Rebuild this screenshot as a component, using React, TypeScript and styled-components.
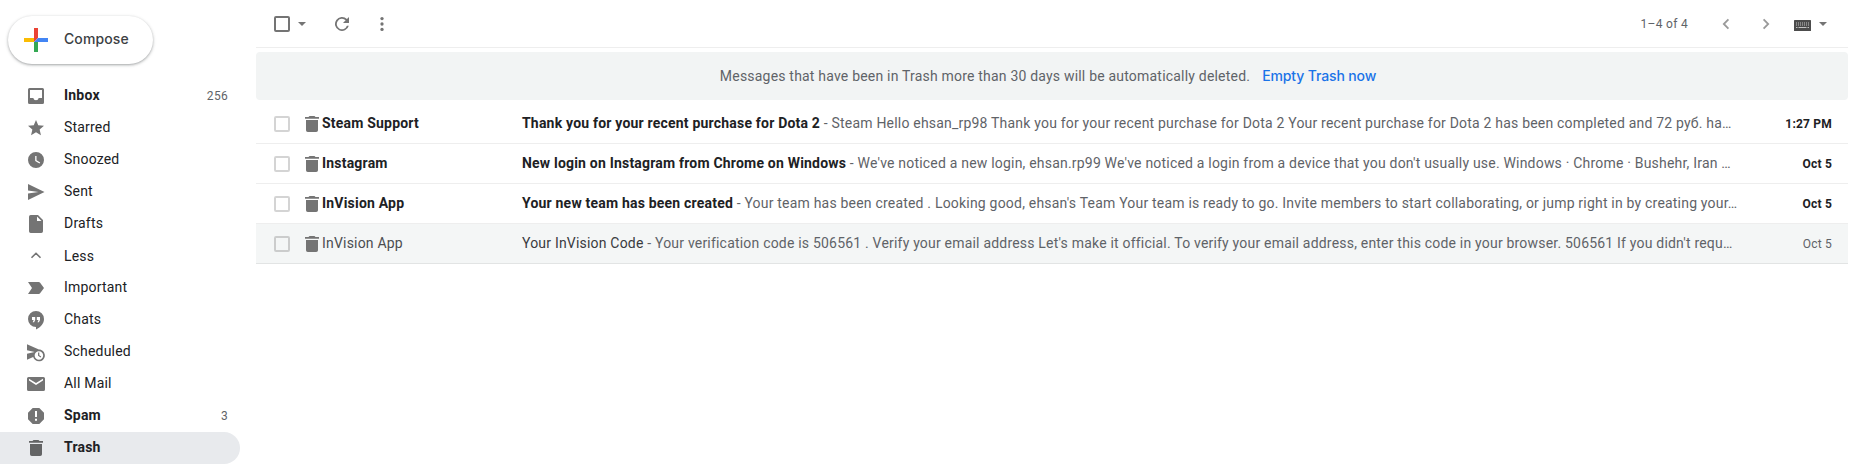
import React from "react";
import styled, { createGlobalStyle } from "styled-components";

const GlobalStyle = createGlobalStyle`
  *, *::before, *::after { box-sizing: border-box; }
  body {
    margin: 0;
    background: #fff;
    color: #202124;
    font-family: Roboto, "Liberation Sans", sans-serif;
    font-size: 14px;
    overflow: hidden;
  }
`;

const Page = styled.div`
  display: flex;
  height: 470px;
  padding-right: 14px;
`;

const Sidebar = styled.nav`
  flex: 0 0 256px;
  padding-top: 16px;
`;

const ComposeButton = styled.button`
  display: flex;
  align-items: center;
  gap: 16px;
  width: 145px;
  height: 48px;
  margin: 0 0 16px 8px;
  padding: 0 0 0 16px;
  border: 0;
  border-radius: 24px;
  background: #fff;
  color: #3c4043;
  font: 500 14px/20px Inter, sans-serif;
  letter-spacing: 0.1px;
  box-shadow: 0 1px 2px 0 rgba(60, 64, 67, 0.3), 0 1px 3px 1px rgba(60, 64, 67, 0.15);
`;

const ComposeLabel = styled.span`
  padding-bottom: 2px;
`;

const NavItem = styled.div<{ $bold?: boolean; $active?: boolean }>`
  display: flex;
  align-items: center;
  width: 240px;
  height: 32px;
  padding: 0 12px 0 26px;
  border-radius: 0 16px 16px 0;
  background: ${(p) => (p.$active ? "#e8eaed" : "transparent")};
  font-weight: ${(p) => (p.$bold ? 700 : 400)};
  letter-spacing: 0.2px;
`;

const NavLabel = styled.span<{ $low?: boolean }>`
  flex: 1;
  margin-left: 18px;
  line-height: 20px;
  padding-bottom: ${(p) => (p.$low ? "0" : "2px")};
`;

const Count = styled.span`
  color: #5f6368;
  font-size: 12px;
  font-weight: 400;
  letter-spacing: 0.3px;
`;

const Svg = styled.svg<{ $size?: number; $color?: string }>`
  display: block;
  flex: none;
  width: ${(p) => p.$size ?? 20}px;
  height: ${(p) => p.$size ?? 20}px;
  fill: ${(p) => p.$color ?? "#747474"};
`;

const Main = styled.main`
  flex: 1;
  min-width: 0;
`;

const Toolbar = styled.header`
  display: flex;
  align-items: center;
  height: 48px;
  padding: 0 21px 0 18px;
  border-bottom: 1px solid #eeeeee;
`;

const Checkbox = styled.span<{ $strong?: boolean }>`
  flex: none;
  width: 16px;
  height: 16px;
  border: 2px solid ${(p) => (p.$strong ? "#747474" : "rgba(0, 0, 0, 0.17)")};
  border-radius: 2px;
`;

const Caret = styled.span`
  width: 0;
  height: 0;
  border: 4px solid transparent;
  border-top-color: #747474;
  border-bottom: 0;
  margin-left: 8px;
`;

const ToolGroup = styled.div<{ $left?: number }>`
  display: flex;
  align-items: center;
  margin-left: ${(p) => p.$left ?? 0}px;
`;

const Pager = styled.div`
  display: flex;
  align-items: center;
  margin-left: auto;
  color: #5f6368;
  font-size: 12px;
  letter-spacing: 0.3px;
`;

const KeyboardIcon = styled.svg`
  display: block;
  width: 17px;
  height: 11px;
  margin: 4px 0 0 18px;
`;

const Banner = styled.div`
  display: flex;
  align-items: center;
  justify-content: center;
  height: 48px;
  margin: 4px 0;
  padding-right: 8px;
  border-radius: 4px;
  background: #f2f4f4;
  color: #5f6368;
  letter-spacing: 0.2px;
`;

const BannerLink = styled.a`
  margin-left: 12px;
  color: #1a73e8;
  font: 500 14px/20px Inter, sans-serif;
  letter-spacing: -0.13px;
`;

const Row = styled.div<{ $unread: boolean }>`
  display: flex;
  align-items: center;
  height: 40px;
  padding: 0 16px 0 18px;
  border-bottom: 1px solid ${(p) => (p.$unread ? "#eeeeee" : "#e2e4e4")};
  background: ${(p) => (p.$unread ? "#fff" : "#f4f6f6")};
  letter-spacing: 0.2px;
  line-height: 20px;
  white-space: nowrap;
`;

const RowIcon = styled.span`
  margin-left: 12px;
`;

const Sender = styled.span<{ $unread: boolean }>`
  flex: 0 0 200px;
  padding-bottom: 2px;
  color: ${(p) => (p.$unread ? "#202124" : "#4b4d50")};
  font-weight: ${(p) => (p.$unread ? 700 : 400)};
`;

const Message = styled.span`
  flex: 1;
  min-width: 0;
  padding-bottom: 2px;
  color: #5f6368;
`;

const Subject = styled.span<{ $unread: boolean }>`
  color: ${(p) => (p.$unread ? "#202124" : "#3a3b3e")};
  font-weight: ${(p) => (p.$unread ? 700 : 400)};
`;

const DateText = styled.span<{ $unread: boolean }>`
  color: ${(p) => (p.$unread ? "#202124" : "#5f6368")};
  font-size: 12px;
  font-weight: ${(p) => (p.$unread ? 700 : 400)};
  letter-spacing: 0.2px;
`;

const icons: Record<string, React.ReactNode> = {
  inbox: (
    <path fillRule="evenodd" d="M3.5 2h13A1.5 1.5 0 0 1 18 3.5v13a1.5 1.5 0 0 1-1.5 1.5h-13A1.5 1.5 0 0 1 2 16.500v-13A1.5 1.5 0 0 1 3.500 2zM4 4v8h3.300a2.750 2.750 0 0 0 5.400 0H16V4z" />
  ),
  star: <path d="M10 14.200 14.950 17.200 13.640 11.560 18 7.780 12.250 7.290 10 2 7.750 7.290 2 7.780 6.360 11.560 5.050 17.200z" />,
  clock: (
    <path fillRule="evenodd" d="M10 2a8 8 0 1 0 0 16 8 8 0 0 0 0-16zM9.200 6h1.300v4.200l3.700 2.200-.7 1.100-4.300-2.600z" />
  ),
  sent: <path d="M2 2 18.500 10 2 18V11.600L12.500 10 2 8.400z" />,
  draft: (
    <path fillRule="evenodd" d="M4.700 1H12l5 5v11.300a1.700 1.700 0 0 1-1.700 1.700H4.700A1.700 1.700 0 0 1 3 17.300V2.700A1.700 1.700 0 0 1 4.700 1zM11 2.500V7h4.500z" />
  ),
  less: <path d="M5.500 11.800 10 7.300l4.500 4.500" fill="none" stroke="#747474" strokeWidth="1.600" />,
  important: <path d="M2 4h10.700c.6 0 1.100.3 1.400.7L18 10l-3.900 5.300c-.3.4-.8.7-1.400.7H2l4-6z" />,
  chats: (
    <path fillRule="evenodd" d="M10 1a8 8 0 0 0 0 16v2.500c5-2.400 8-6.100 8-10.500A8 8 0 0 0 10 1zM6 7v3h1.700L6.700 12.200h1.400L9.200 10V7zM10.800 7v3h1.700l-1 2.200h1.400L14 10V7z" />
  ),
  scheduled: (
    <g transform="translate(-.7 -.2) scale(.85)">
      <path d="M16.500 12.500H15v4l3 2 .75-1.230-2.250-1.520V12.500zM16 9 2 3v7l9 2-9 2v7l7.270-3.110C10.090 20.830 12.790 23 16 23c3.860 0 7-3.140 7-7s-3.140-7-7-7zm0 12c-2.750 0-4.980-2.220-5-4.970v-.07c.02-2.740 2.250-4.960 5-4.960 2.760 0 5 2.240 5 5s-2.240 5-5 5z" />
    </g>
  ),
  mail: (
    <path fillRule="evenodd" d="M2.600 3h14.800A1.600 1.600 0 0 1 19 4.600v10.800a1.600 1.600 0 0 1-1.600 1.600H2.600A1.600 1.600 0 0 1 1 15.400V4.600A1.600 1.600 0 0 1 2.600 3zM3 4.800v1.800l7 4.300 7-4.300V4.800L10 9z" />
  ),
  spam: (
    <path fillRule="evenodd" d="M6.700 2h6.600L18 6.700v6.600L13.300 18H6.700L2 13.300V6.700zM9 5v6h2V5zM9 12.700v2.100h2v-2.100z" />
  ),
  trash: <path d="M3 3h3.500l1-1h5l1 1H17v1.800H3zM4 6h12v10.200A1.800 1.800 0 0 1 14.200 18H5.800A1.800 1.800 0 0 1 4 16.200z" />,
};

const Icon = ({ name, color }: { name: string; color?: string }) => (
  <Svg viewBox="0 0 20 20" $color={color}>
    {icons[name]}
  </Svg>
);

const folders = [
  { icon: "inbox", label: "Inbox", count: "256", bold: true },
  { icon: "star", label: "Starred" },
  { icon: "clock", label: "Snoozed" },
  { icon: "sent", label: "Sent" },
  { icon: "draft", label: "Drafts" },
  { icon: "less", label: "Less", low: true },
  { icon: "important", label: "Important" },
  { icon: "chats", label: "Chats" },
  { icon: "scheduled", label: "Scheduled" },
  { icon: "mail", label: "All Mail" },
  { icon: "spam", label: "Spam", count: "3", bold: true },
  { icon: "trash", label: "Trash", bold: true, active: true },
];

const messages = [
  {
    sender: "Steam Support",
    subject: "Thank you for your recent purchase for Dota 2",
    snippet:
      "Steam Hello ehsan_rp98 Thank you for your recent purchase for Dota 2 Your recent purchase for Dota 2 has been completed and 72 руб. ha…",
    date: "1:27 PM",
    unread: true,
  },
  {
    sender: "Instagram",
    subject: "New login on Instagram from Chrome on Windows",
    snippet:
      "We've noticed a new login, ehsan.rp99 We've noticed a login from a device that you don't usually use. Windows · Chrome · Bushehr, Iran …",
    date: "Oct 5",
    unread: true,
  },
  {
    sender: "InVision App",
    subject: "Your new team has been created",
    snippet:
      "Your team has been created . Looking good, ehsan's Team Your team is ready to go. Invite members to start collaborating, or jump right in by creating your…",
    date: "Oct 5",
    unread: true,
  },
  {
    sender: "InVision App",
    subject: "Your InVision Code",
    snippet:
      "Your verification code is 506561 . Verify your email address Let's make it official. To verify your email address, enter this code in your browser. 506561 If you didn't requ…",
    date: "Oct 5",
    unread: false,
  },
];

export default function App() {
  return (
    <Page>
      <GlobalStyle />
      <Sidebar>
        <ComposeButton>
          <Svg viewBox="0 0 24 24" $size={24}>
            <path fill="#ea4335" d="M10 0h4v10l-4 4z" />
            <path fill="#4285f4" d="M14 10h10v4H14z" />
            <path fill="#34a853" d="M10 14h4v10h-4z" />
            <path fill="#fbbc04" d="M0 10h10v4H0z" />
            <path fill="#4285f4" d="M14 10v4h-4z" />
          </Svg>
          <ComposeLabel>Compose</ComposeLabel>
        </ComposeButton>
        {folders.map((f) => (
          <NavItem key={f.label} $bold={f.bold} $active={f.active}>
            <Icon name={f.icon} color={f.active ? "#636465" : undefined} />
            <NavLabel $low={f.low}>{f.label}</NavLabel>
            {f.count && <Count>{f.count}</Count>}
          </NavItem>
        ))}
      </Sidebar>
      <Main>
        <Toolbar>
          <Checkbox $strong />
          <Caret />
          <ToolGroup $left={26}>
            <Svg viewBox="0 0 20 20">
              <path d="M14.950 5.050A7 7 0 1 0 16.770 11.750H14.900A5.200 5.200 0 1 1 13.650 6.350L11 9h6V3z" />
            </Svg>
          </ToolGroup>
          <ToolGroup $left={20}>
            <Svg viewBox="0 0 20 20">
              <circle cx="10" cy="4.600" r="1.650" />
              <circle cx="10" cy="10" r="1.650" />
              <circle cx="10" cy="15.400" r="1.650" />
            </Svg>
          </ToolGroup>
          <Pager>
            1–4 of 4
            <ToolGroup $left={28}>
              <Svg viewBox="0 0 20 20">
                <path d="M12.400 5.300 7.800 10l4.600 4.700" fill="none" stroke="#9a9a9a" strokeWidth="1.800" />
              </Svg>
            </ToolGroup>
            <ToolGroup $left={20}>
              <Svg viewBox="0 0 20 20">
                <path d="M7.600 5.300 12.200 10l-4.600 4.700" fill="none" stroke="#9a9a9a" strokeWidth="1.800" />
              </Svg>
            </ToolGroup>
            <KeyboardIcon viewBox="0 0 17 11">
              <rect width="17" height="11" rx=".6" fill="#4c4c4c" />
              <path d="M2 3h13M2 5h13" stroke="#c4c4c4" strokeDasharray="1 1" />
              <path d="M2 7.500h1.500M4.500 7.500h8M13.500 7.500H15" stroke="#c4c4c4" />
            </KeyboardIcon>
            <Caret />
          </Pager>
        </Toolbar>
        <Banner>
          Messages that have been in Trash more than 30 days will be automatically deleted.
          <BannerLink>Empty Trash now</BannerLink>
        </Banner>
        {messages.map((m) => (
          <Row key={m.subject} $unread={m.unread}>
            <Checkbox />
            <RowIcon>
              <Icon name="trash" />
            </RowIcon>
            <Sender $unread={m.unread}>{m.sender}</Sender>
            <Message>
              <Subject $unread={m.unread}>{m.subject}</Subject> - {m.snippet}
            </Message>
            <DateText $unread={m.unread}>{m.date}</DateText>
          </Row>
        ))}
      </Main>
    </Page>
  );
}
